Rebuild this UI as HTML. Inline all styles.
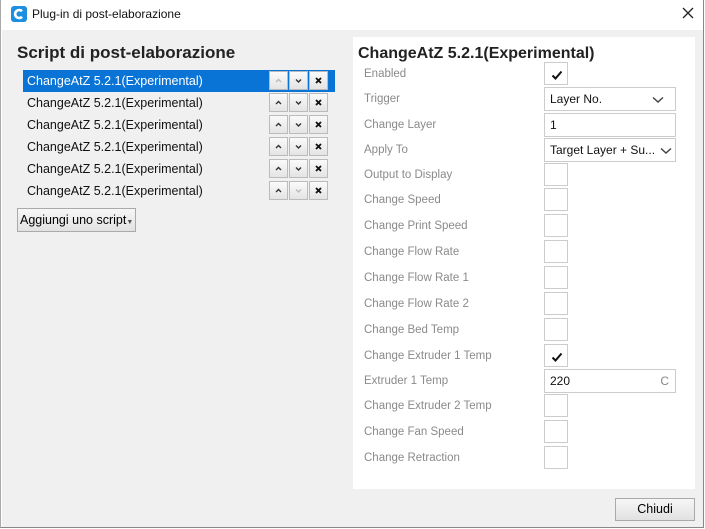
<!DOCTYPE html><html><head><style>
body{margin:0;width:705px;height:529px;background:#fff;font-family:"Liberation Sans","DejaVu Sans",sans-serif;position:relative;overflow:hidden}
.win{position:absolute;left:0;top:0;width:702px;height:527px;border-right:1px solid #888;border-bottom:1px solid #888;border-left:1px solid #aaa}
.title{position:absolute;left:0;top:0;width:702px;height:30px;background:#fff}
.body{position:absolute;left:1px;top:30px;width:701px;height:497px;background:#f0f0f0}
.a{position:absolute;white-space:nowrap}
.row{position:absolute;left:21px;width:312px;height:22px;font-size:12.5px;color:#111;line-height:22px}
.row span{padding-left:4px}
.sel{background:#0a74d6;color:#fff}
.b{position:absolute;width:19px;height:19px;border:1px solid #bbb;background:linear-gradient(#fafafa,#e4e4e4);box-sizing:border-box}
.b svg{position:absolute;left:4px;top:4px}
.lbl{position:absolute;left:364px;font-size:11.5px;color:#8a8a8a}
.cb{position:absolute;left:544px;width:24px;height:23px;border:1px solid #ccc;box-sizing:border-box;background:#fff}
.cb svg{position:absolute;left:6px;top:6px}
.inp{position:absolute;left:544px;width:132px;height:24px;border:1px solid #ccc;box-sizing:border-box;background:#fff;font-size:12px;line-height:22px;padding-left:5px;color:#111}
.inp svg{position:absolute;right:11px;top:8px}
</style></head><body>
<svg width="0" height="0" style="position:absolute"><defs>
<symbol id="up" viewBox="0 0 9 9"><path d="M2 6L4.5 3.5L7 6" stroke="currentColor" stroke-width="1.4" fill="none"/></symbol>
<symbol id="dn" viewBox="0 0 9 9"><path d="M2 3.5L4.5 6L7 3.5" stroke="currentColor" stroke-width="1.4" fill="none"/></symbol>
<symbol id="x" viewBox="0 0 9 9"><path d="M2 2L7 7M7 2L2 7" stroke="currentColor" stroke-width="1.8" fill="none"/></symbol>
<symbol id="ck" viewBox="0 0 12 12"><path d="M1.5 6.5L4.5 9.5L10.5 2.5" stroke="#111" stroke-width="2" fill="none"/></symbol>
<symbol id="ch" viewBox="0 0 12 8"><path d="M1 1.5L6 6L11 1.5" stroke="#444" stroke-width="1.5" fill="none"/></symbol>
</defs></svg>
<div class="win">
<div class="title">
<svg style="position:absolute;left:10px;top:6px" width="16" height="16" viewBox="0 0 16 16"><rect width="16" height="16" rx="3" fill="#1e8fe0"/><path d="M11 5.2A4 4 0 1 0 11 10.8" stroke="#fff" stroke-width="2.6" fill="none"/></svg>
<div class="a" style="left:31px;top:7px;font-size:12px;color:#111">Plug-in di post-elaborazione</div>
<svg style="position:absolute;left:681px;top:7px" width="12" height="12" viewBox="0 0 12 12"><path d="M1 1L11 11M11 1L1 11" stroke="#222" stroke-width="1.3"/></svg>
</div>
<div class="body">
<div class="a" style="left:15px;top:13px;font-size:17px;font-weight:bold;color:#222">Script di post-elaborazione</div>
<div class="row sel" style="top:40px"><span>ChangeAtZ 5.2.1(Experimental)</span></div>
<div class="row" style="top:62px"><span>ChangeAtZ 5.2.1(Experimental)</span></div>
<div class="row" style="top:84px"><span>ChangeAtZ 5.2.1(Experimental)</span></div>
<div class="row" style="top:106px"><span>ChangeAtZ 5.2.1(Experimental)</span></div>
<div class="row" style="top:128px"><span>ChangeAtZ 5.2.1(Experimental)</span></div>
<div class="row" style="top:150px"><span>ChangeAtZ 5.2.1(Experimental)</span></div>
<div class="b" style="left:267px;top:41px;color:#bbb"><svg width="9" height="9"><use href="#up"/></svg></div><div class="b" style="left:287px;top:41px;color:#333"><svg width="9" height="9"><use href="#dn"/></svg></div><div class="b" style="left:307px;top:41px;color:#111"><svg width="9" height="9"><use href="#x"/></svg></div>
<div class="b" style="left:267px;top:63px;color:#333"><svg width="9" height="9"><use href="#up"/></svg></div><div class="b" style="left:287px;top:63px;color:#333"><svg width="9" height="9"><use href="#dn"/></svg></div><div class="b" style="left:307px;top:63px;color:#111"><svg width="9" height="9"><use href="#x"/></svg></div>
<div class="b" style="left:267px;top:85px;color:#333"><svg width="9" height="9"><use href="#up"/></svg></div><div class="b" style="left:287px;top:85px;color:#333"><svg width="9" height="9"><use href="#dn"/></svg></div><div class="b" style="left:307px;top:85px;color:#111"><svg width="9" height="9"><use href="#x"/></svg></div>
<div class="b" style="left:267px;top:107px;color:#333"><svg width="9" height="9"><use href="#up"/></svg></div><div class="b" style="left:287px;top:107px;color:#333"><svg width="9" height="9"><use href="#dn"/></svg></div><div class="b" style="left:307px;top:107px;color:#111"><svg width="9" height="9"><use href="#x"/></svg></div>
<div class="b" style="left:267px;top:129px;color:#333"><svg width="9" height="9"><use href="#up"/></svg></div><div class="b" style="left:287px;top:129px;color:#333"><svg width="9" height="9"><use href="#dn"/></svg></div><div class="b" style="left:307px;top:129px;color:#111"><svg width="9" height="9"><use href="#x"/></svg></div>
<div class="b" style="left:267px;top:151px;color:#333"><svg width="9" height="9"><use href="#up"/></svg></div><div class="b" style="left:287px;top:151px;color:#bbb"><svg width="9" height="9"><use href="#dn"/></svg></div><div class="b" style="left:307px;top:151px;color:#111"><svg width="9" height="9"><use href="#x"/></svg></div>
<div class="a" style="left:15px;top:178px;width:119px;height:24px;border:1px solid #aaa;background:linear-gradient(#f6f6f6,#e2e2e2);font-size:12.5px;line-height:22px;padding-left:2px;box-sizing:border-box">Aggiungi uno script<span style="font-size:7px;color:#555">▼</span></div>
<div class="a" style="left:351px;top:7px;width:342px;height:452px;background:#fff"></div>
<div class="a" style="left:613px;top:468px;width:80px;height:23px;border:1px solid #aaa;background:linear-gradient(#f6f6f6,#e2e2e2);box-sizing:border-box;text-align:center;font-size:12.5px;line-height:21px">Chiudi</div>
</div>
</div>
<div class="a" style="left:358px;top:45px;font-size:16px;font-weight:bold;color:#222">ChangeAtZ 5.2.1(Experimental)</div>
<div class="lbl" style="top:68px">Enabled</div><div class="cb" style="top:62px"><svg width="12" height="12"><use href="#ck"/></svg></div>
<div class="lbl" style="top:93px">Trigger</div><div class="inp" style="top:87px">Layer No.<svg width="12" height="8"><use href="#ch"/></svg></div>
<div class="lbl" style="top:119px">Change Layer</div><div class="inp" style="top:113px">1</div>
<div class="lbl" style="top:144px">Apply To</div><div class="inp" style="top:138px">Target Layer + Su...<svg width="12" height="8" style="right:3px"><use href="#ch"/></svg></div>
<div class="lbl" style="top:169px">Output to Display</div><div class="cb" style="top:163px"></div>
<div class="lbl" style="top:194px">Change Speed</div><div class="cb" style="top:188px"></div>
<div class="lbl" style="top:220px">Change Print Speed</div><div class="cb" style="top:214px"></div>
<div class="lbl" style="top:246px">Change Flow Rate</div><div class="cb" style="top:240px"></div>
<div class="lbl" style="top:272px">Change Flow Rate 1</div><div class="cb" style="top:266px"></div>
<div class="lbl" style="top:298px">Change Flow Rate 2</div><div class="cb" style="top:292px"></div>
<div class="lbl" style="top:324px">Change Bed Temp</div><div class="cb" style="top:318px"></div>
<div class="lbl" style="top:350px">Change Extruder 1 Temp</div><div class="cb" style="top:344px"><svg width="12" height="12"><use href="#ck"/></svg></div>
<div class="lbl" style="top:375px">Extruder 1 Temp</div><div class="inp" style="top:369px">220<span style="position:absolute;right:6px;color:#888">C</span></div>
<div class="lbl" style="top:400px">Change Extruder 2 Temp</div><div class="cb" style="top:394px"></div>
<div class="lbl" style="top:426px">Change Fan Speed</div><div class="cb" style="top:420px"></div>
<div class="lbl" style="top:452px">Change Retraction</div><div class="cb" style="top:446px"></div>
</body></html>
